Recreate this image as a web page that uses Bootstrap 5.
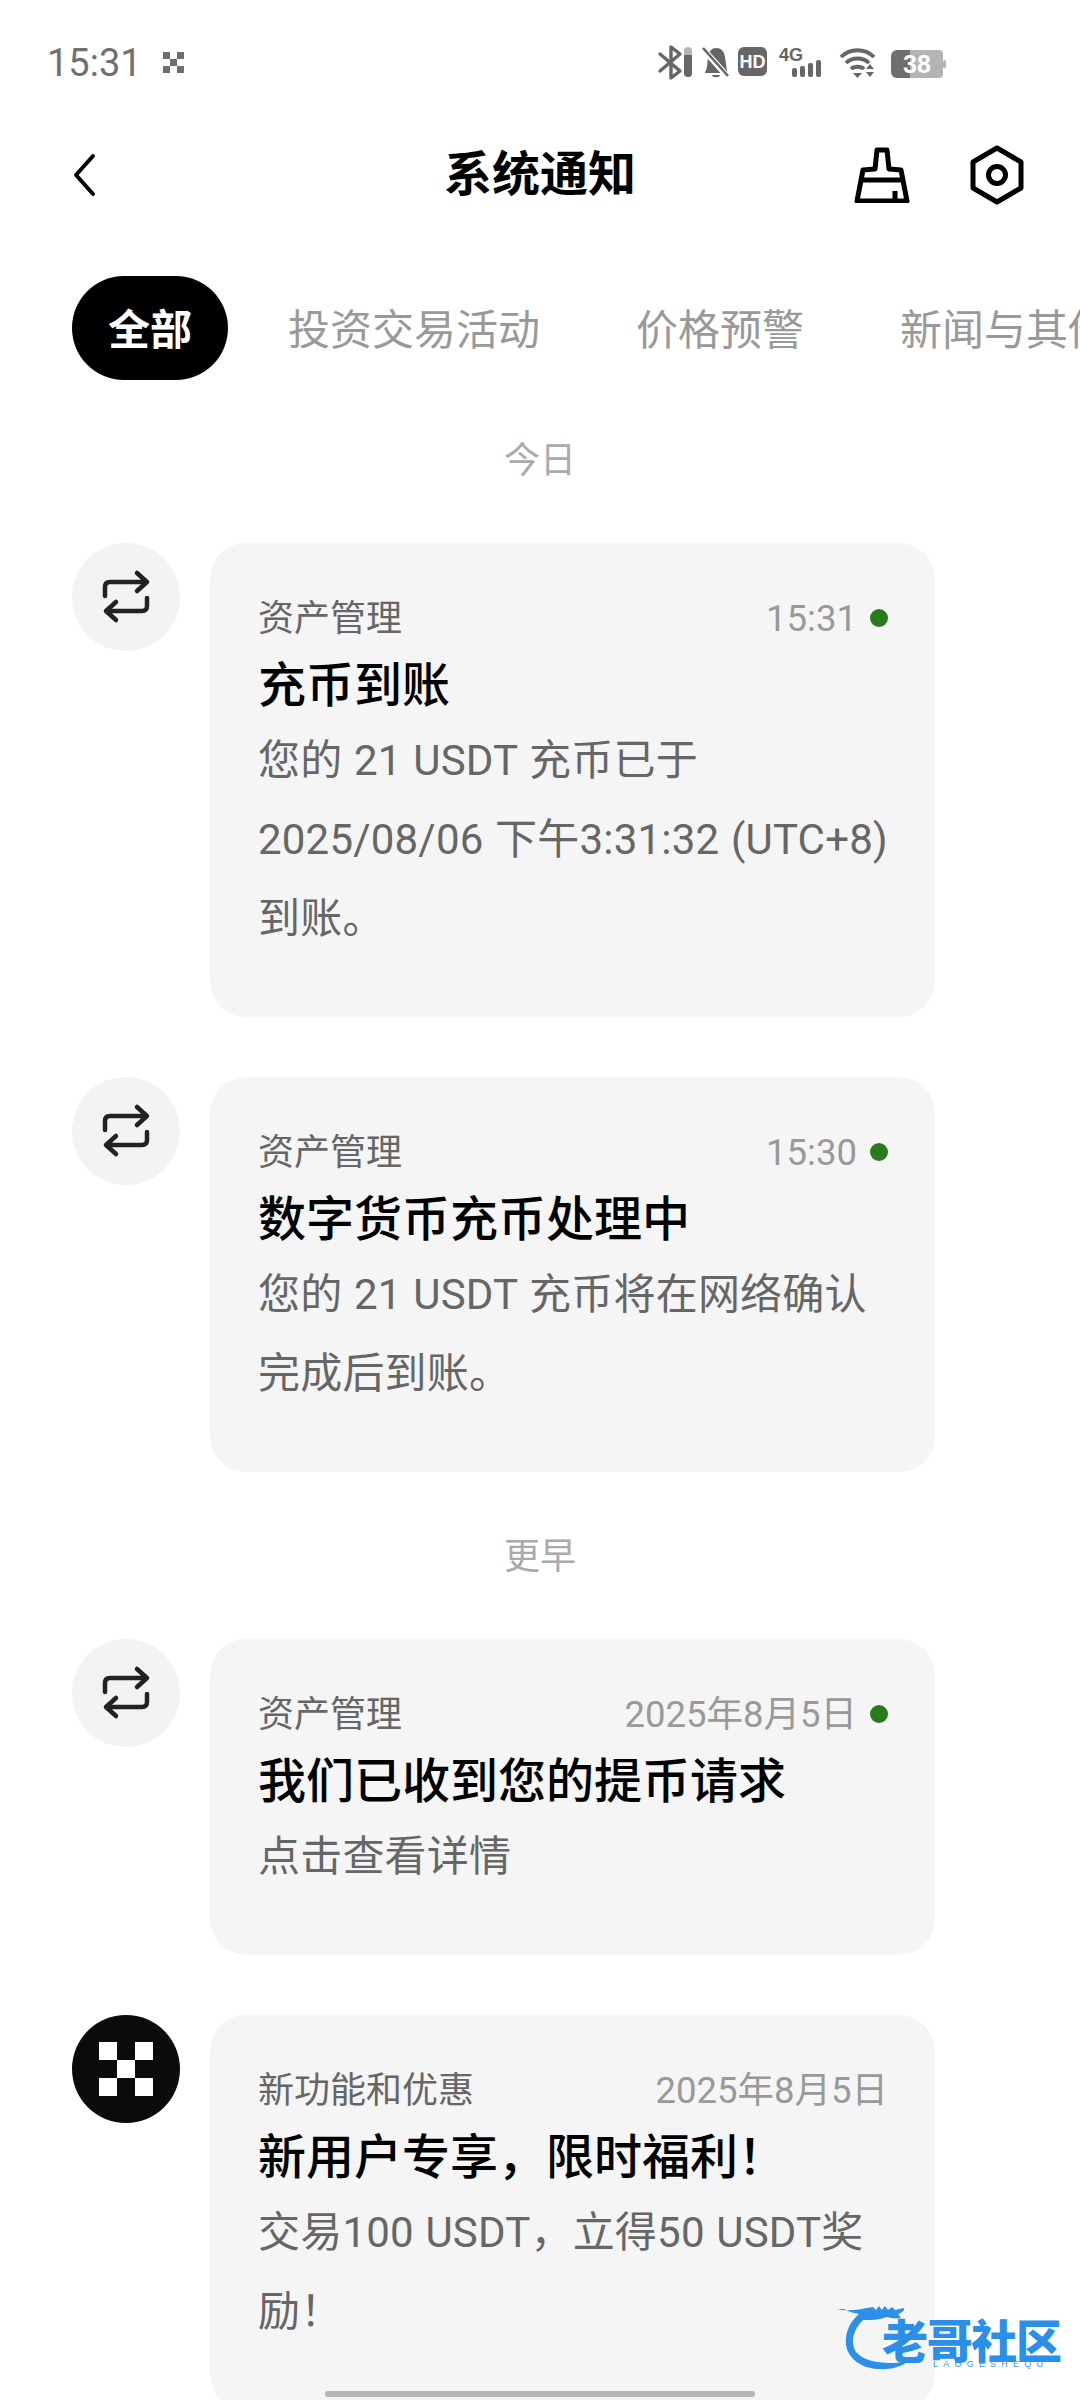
<!DOCTYPE html>
<html lang="zh-CN">
  <head>
    <meta charset="UTF-8" />
    <meta name="viewport" content="width=device-width, initial-scale=1.0" />
    <title>系统通知</title>
    <link href="https://cdn.jsdelivr.net/npm/bootstrap@5.3.0/dist/css/bootstrap.min.css" rel="stylesheet" />
    <style>
      body {
        background-color: #fff;
        font-family: Roboto, "Noto Sans CJK SC", sans-serif;
      }
      .phone {
        width: 1080px;
        height: 2400px;
        position: relative;
        overflow: hidden;
      }
      .status-bar {
        height: 126px;
        padding-left: 47px;
        color: #707070;
        font-size: 38px;
      }
      .status-logo {
        margin-left: 20px;
      }
      .status-icons {
        margin-left: auto;
        margin-right: 125px;
      }
      .top-bar {
        height: 98px;
        padding: 0 56px 0 72px;
        position: relative;
      }
      .page-title {
        font-size: 48px;
        font-weight: 700;
        color: #000;
        line-height: 60px;
        margin: 0;
      }
      .tabs-row {
        margin-top: 52px;
        padding-left: 72px;
        gap: 24px;
        white-space: nowrap;
      }
      .tab-item {
        height: 104px;
        line-height: 109px;
        padding: 0 36px;
        font-size: 42px;
        color: #999;
        flex-shrink: 0;
      }
      .tab-item.on {
        background: #000;
        color: #fff;
        font-weight: 700;
        border-radius: 52px;
      }
      .day-label {
        text-align: center;
        font-size: 36px;
        color: #aaa;
        line-height: 50px;
      }
      .msg-row {
        padding-left: 72px;
        gap: 30px;
        margin-bottom: 60px;
      }
      .msg-icon {
        width: 108px;
        height: 108px;
        border-radius: 50%;
        background: #f3f3f3;
        flex-shrink: 0;
      }
      .msg-icon.dark {
        background: #0b0b0b;
      }
      .msg-box {
        width: 725px;
        background: #f5f5f5;
        border-radius: 36px;
        padding: 50px 47px 59px 48px;
      }
      .msg-head {
        height: 52px;
        font-size: 36px;
        color: #666;
        line-height: 52px;
      }
      .msg-time {
        margin-left: auto;
        color: #999;
        font-size: 36.5px;
      }
      .msg-dot {
        width: 18px;
        height: 18px;
        border-radius: 50%;
        background: #2b7a1e;
        margin: -2px 0 0 13px;
      }
      .msg-title {
        font-size: 48px;
        font-weight: 500;
        color: #000;
        line-height: 70px;
        margin: 6px 0 0;
      }
      .msg-body {
        font-size: 42px;
        color: #666;
        line-height: 79px;
        letter-spacing: 0.2px;
        word-spacing: 1px;
        white-space: nowrap;
        margin: 0;
      }
      .home-bar {
        position: absolute;
        left: 325px;
        bottom: 3px;
        width: 430px;
        height: 6px;
        border-radius: 3px;
        background: #b5b5b5;
      }
      .watermark {
        position: absolute;
        left: 835px;
        top: 2300px;
      }
    </style>
  </head>
  <body>
    <div class="phone">
      <div class="status-bar d-flex align-items-center">
        <span>15:31</span>
        <svg class="status-logo" width="24" height="24" viewBox="0 0 24 24" fill="#6e6e6e">
          <rect x="1" y="1" width="7" height="7" /><rect x="15" y="1" width="7" height="7" /><rect x="8" y="8" width="7" height="7" /><rect x="1" y="15" width="7" height="7" /><rect x="15" y="15" width="7" height="7" />
        </svg>
        <svg class="status-icons" width="300" height="40" viewBox="655 43 300 40">
          <path d="M660 54l20 17-9 7V47l9 7-20 17" fill="none" stroke="#666" stroke-width="3.4" stroke-linejoin="round" stroke-linecap="round" />
          <rect x="684" y="47" width="8" height="30" rx="4" fill="#b5b5b5" />
          <path d="M684 55h8v18a4 4 0 0 1-8 0z" fill="#666" />
          <path d="M705 72c3-4 2-10 3-15 1-6 4-9 8-9 5 0 8 3 9 9l2 14 1 2h-23zM712 75h8c0 3-8 3-8 0z" fill="#666" />
          <path d="M703 49l25 28" stroke="#fff" stroke-width="6" />
          <path d="M703 48l25 28" stroke="#666" stroke-width="2.6" />
          <rect x="738" y="47" width="29" height="29" rx="6" fill="#666" />
          <text x="752.500" y="68" text-anchor="middle" font-family="Liberation Sans" font-weight="700" font-size="18" fill="#fff">HD</text>
          <text x="779" y="61" font-family="Liberation Sans" font-weight="700" font-size="18" fill="#666">4G</text>
          <rect x="792" y="68" width="5" height="9" rx="2" fill="#666" /><rect x="800" y="66" width="5" height="11" rx="2" fill="#666" /><rect x="808" y="63" width="5" height="14" rx="2" fill="#666" /><rect x="816" y="60" width="5" height="17" rx="2" fill="#666" />
          <path d="M841 57c9-9 24-9 33 0M846 63c6-6 17-6 23 0M851 69c3-3 10-3 13 0" fill="none" stroke="#666" stroke-width="3.8" />
          <path d="M853 73h9l-4.500 5z" fill="#666" />
          <path d="M870 64l4 5h-8zM866 72h8l-4 5z" fill="#666" />
          <path d="M897 50h16v28h-16a6 6 0 0 1-6-6V56a6 6 0 0 1 6-6z" fill="#6f6f6f" />
          <path d="M910 50h29a4 4 0 0 1 4 4v20a4 4 0 0 1-4 4h-29z" fill="#b4b4b4" />
          <rect x="943" y="60" width="3" height="8" rx="1.500" fill="#b4b4b4" />
          <text x="917" y="73" text-anchor="middle" font-family="Liberation Sans" font-weight="700" font-size="25" fill="#fff">38</text>
        </svg>
      </div>

      <div class="top-bar d-flex align-items-center justify-content-between">
        <svg width="24" height="44" viewBox="0 0 24 44" fill="none" stroke="#000" stroke-width="4" stroke-linecap="round" stroke-linejoin="round">
          <path d="M21 3L4 22l17 19" />
        </svg>
        <h1 class="page-title position-absolute top-50 start-50 translate-middle">系统通知</h1>
        <div class="d-flex align-items-center" style="gap: 60px">
          <svg width="56" height="56" viewBox="0 0 56 56" fill="none" stroke="#000" stroke-width="5" stroke-linejoin="round">
            <path d="M23 3h10l2 19 12 1 6 31H3l6-31 12-1z" />
            <path d="M7 33h42M41 44v10" />
          </svg>
          <svg width="54" height="60" viewBox="0 0 54 60" fill="none" stroke="#000" stroke-width="5" stroke-linejoin="round">
            <path d="M27 3l24 14v26L27 57 3 43V17z" />
            <circle cx="27" cy="30" r="8.500" />
          </svg>
        </div>
      </div>

      <div class="tabs-row d-flex">
        <div class="tab-item on">全部</div>
        <div class="tab-item">投资交易活动</div>
        <div class="tab-item">价格预警</div>
        <div class="tab-item">新闻与其他</div>
      </div>

      <div class="day-label" style="margin-top: 56px; margin-bottom: 57px">今日</div>

      <div class="msg-row d-flex align-items-start">
        <div class="msg-icon">
          <svg width="108" height="108" viewBox="0 0 108 108" fill="none" stroke="#222" stroke-width="4.500" stroke-linecap="round" stroke-linejoin="round">
            <path d="M33 53V44q0-5 5-5h36M65 30l10 9-10 9M75 55v8q0 5-5 5H34M44 59l-10 9 10 9" />
          </svg>
        </div>
        <div class="msg-box">
          <div class="msg-head d-flex align-items-center">
            <span>资产管理</span><span class="msg-time">15:31</span><span class="msg-dot"></span>
          </div>
          <h2 class="msg-title">充币到账</h2>
          <p class="msg-body">您的 21 USDT 充币已于<br />2025/08/06 下午3:31:32 (UTC+8)<br />到账。</p>
        </div>
      </div>

      <div class="msg-row d-flex align-items-start">
        <div class="msg-icon">
          <svg width="108" height="108" viewBox="0 0 108 108" fill="none" stroke="#222" stroke-width="4.500" stroke-linecap="round" stroke-linejoin="round">
            <path d="M33 53V44q0-5 5-5h36M65 30l10 9-10 9M75 55v8q0 5-5 5H34M44 59l-10 9 10 9" />
          </svg>
        </div>
        <div class="msg-box">
          <div class="msg-head d-flex align-items-center">
            <span>资产管理</span><span class="msg-time">15:30</span><span class="msg-dot"></span>
          </div>
          <h2 class="msg-title">数字货币充币处理中</h2>
          <p class="msg-body">您的 21 USDT 充币将在网络确认<br />完成后到账。</p>
        </div>
      </div>

      <div class="day-label" style="margin-bottom: 57px">更早</div>

      <div class="msg-row d-flex align-items-start">
        <div class="msg-icon">
          <svg width="108" height="108" viewBox="0 0 108 108" fill="none" stroke="#222" stroke-width="4.500" stroke-linecap="round" stroke-linejoin="round">
            <path d="M33 53V44q0-5 5-5h36M65 30l10 9-10 9M75 55v8q0 5-5 5H34M44 59l-10 9 10 9" />
          </svg>
        </div>
        <div class="msg-box">
          <div class="msg-head d-flex align-items-center">
            <span>资产管理</span><span class="msg-time">2025年8月5日</span><span class="msg-dot"></span>
          </div>
          <h2 class="msg-title">我们已收到您的提币请求</h2>
          <p class="msg-body">点击查看详情</p>
        </div>
      </div>

      <div class="msg-row d-flex align-items-start">
        <div class="msg-icon dark">
          <svg width="108" height="108" viewBox="0 0 108 108" fill="#fff">
            <rect x="27" y="27" width="18" height="18" /><rect x="63" y="27" width="18" height="18" /><rect x="45" y="45" width="18" height="18" /><rect x="27" y="63" width="18" height="18" /><rect x="63" y="63" width="18" height="18" />
          </svg>
        </div>
        <div class="msg-box">
          <div class="msg-head d-flex align-items-center">
            <span>新功能和优惠</span><span class="msg-time">2025年8月5日</span>
          </div>
          <h2 class="msg-title">新用户专享，限时福利！</h2>
          <p class="msg-body">交易100 USDT，立得50 USDT奖<br />励！</p>
        </div>
      </div>

      <svg class="watermark" width="235" height="80" viewBox="835 2300 235 80">
        <path transform="translate(-5 0)" d="M842 2309c12 3 24 0 36-2l3 3 3-4 3 4 3-4 3 4 4-3 3 3 9-2c1 3-3 5-6 6l3 4c-6 1-10 0-14-1-8 3-16 3-24 3-10 10-13 22-7 32 7 9 24 11 36 11 8 0 14-2 20-6-6 9-20 13-34 12-20-1-34-14-32-31 1-10 6-18 13-24-7-1-11-3-15-5z" fill="#2c90e8" />
        <text x="882" y="2358" font-family="Noto Sans CJK SC" font-weight="900" font-size="46" fill="#2a8fe9" textLength="180">老哥社区</text>
        <text x="933" y="2367" font-family="Liberation Sans" font-size="9" fill="#3f97e4" textLength="110">LAOGESHEQU</text>
      </svg>
      <div class="home-bar"></div>
    </div>
    <script src="https://cdn.jsdelivr.net/npm/bootstrap@5.3.0/dist/js/bootstrap.bundle.min.js"></script>
  </body>
</html>
